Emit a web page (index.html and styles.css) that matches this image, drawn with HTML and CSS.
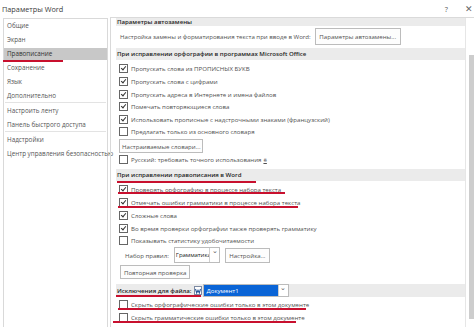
FILE: index.html
```html
<!DOCTYPE html>
<html lang="ru">

<head>
    <meta charset="UTF-8">
    <meta name="viewport" content="width=device-width, initial-scale=1.0">
    <title>Параметры Word</title>
    <link rel="stylesheet" href="styles.css">
</head>

<body>
    <div class="window">
        <div class="titlebar">
            <span class="title">Параметры Word</span>
            <span class="help">?</span>
            <span class="close">✕</span>
        </div>

        <div class="main">
            <!-- Left navigation -->
            <ul class="nav">
                <li>Общие</li>
                <li>Экран</li>
                <li class="active">Правописание</li>
                <li>Сохранение</li>
                <li>Язык</li>
                <li class="sep">Дополнительно</li>
                <li>Настроить ленту</li>
                <li class="sep">Панель быстрого доступа</li>
                <li>Надстройки</li>
                <li>Центр управления безопасностью</li>
            </ul>

            <!-- Options -->
            <div class="content">
                <div class="scroll">
                    <div class="head head-cut">Параметры автозамены</div>
                    <div class="line autocorrect">
                        <span>Настройка замены и форматирования текста при вводе в Word:</span>
                        <button class="btn btn-autocorrect">Параметры автозамены...</button>
                    </div>

                    <div class="head head-office">При исправлении орфографии в программах Microsoft Office</div>
                    <div class="group group-office">
                        <label class="row"><span class="cb on"></span>Пропускать слова из ПРОПИСНЫХ БУКВ</label>
                        <label class="row"><span class="cb on"></span>Пропускать слова с цифрами</label>
                        <label class="row"><span class="cb on"></span>Пропускать адреса в Интернете и имена файлов</label>
                        <label class="row"><span class="cb on"></span>Помечать повторяющиеся слова</label>
                        <label class="row"><span class="cb on"></span>Использовать прописные с надстрочными знаками (французский)</label>
                        <label class="row"><span class="cb"></span>Предлагать только из основного словаря</label>
                        <button class="btn btn-dict">Настраиваемые словари...</button>
                        <label class="row"><span class="cb"></span>Русский: требовать точного использования <u>ё</u></label>
                    </div>

                    <div class="head head-word marked">При исправлении правописания в Word</div>
                    <div class="group group-word">
                        <label class="row marked mark-spell"><span class="cb on"></span>Проверять орфографию в процессе набора текста</label>
                        <label class="row marked mark-grammar"><span class="cb on"></span>Отмечать ошибки грамматики в процессе набора текста</label>
                        <label class="row"><span class="cb on"></span>Сложные слова</label>
                        <label class="row"><span class="cb on"></span>Во время проверки орфографии также проверять грамматику</label>
                        <label class="row"><span class="cb"></span>Показывать статистику удобочитаемости</label>
                        <div class="line rules">
                            <span class="rules-label">Набор правил:</span>
                            <span class="select select-rules"><span class="value">Грамматика</span><span class="arrow">⌄</span></span>
                            <button class="btn btn-setup">Настройка...</button>
                        </div>
                        <button class="btn btn-recheck">Повторная проверка</button>
                    </div>

                    <div class="head head-file">
                        <span class="marked mark-file">Исключения для файла:</span>
                        <svg class="doc-icon" width="8" height="9" viewBox="0 0 8 9">
                            <rect x="0.5" y="0.5" width="7" height="8" fill="#fff" stroke="#7d8aa3"/>
                            <path d="M1.5 3 L2.7 7 L4 4.2 L5.3 7 L6.5 3" fill="none" stroke="#2b579a" stroke-width="1.1"/>
                        </svg>
                        <span class="select select-file"><span class="value">Документ1</span><span class="arrow">⌄</span></span>
                    </div>
                    <div class="group group-file">
                        <label class="row marked mark-hide1"><span class="cb"></span>Скрыть орфографические ошибки только в этом документе</label>
                        <label class="row marked mark-hide2"><span class="cb"></span>Скрыть грамматические ошибки только в этом документе</label>
                    </div>
                </div>
                <div class="scrollbar"><div class="thumb"></div></div>
            </div>
        </div>
    </div>
</body>

</html>
```

FILE: styles.css
```css
body {
    margin: 0;
    background: #fff;
    font-family: 'Open Sans', 'Liberation Sans', sans-serif;
    font-size: 6.1px;
    color: #505050;
}

.window {
    width: 474px;
    height: 327px;
    overflow: hidden;
    display: flex;
    flex-direction: column;
}

/* Title bar */
.titlebar {
    height: 17px;
    display: flex;
    align-items: center;
    padding-left: 2px;
    font-size: 7.3px;
    color: #3c3c3c;
}

.title {
    flex-grow: 1;
}

.help {
    margin-right: 17px;
    color: #555;
}

.close {
    margin-right: 1px;
    font-size: 9px;
    color: #666;
}

.main {
    flex-grow: 1;
    display: flex;
}

/* Navigation */
.nav {
    list-style: none;
    margin: 1px 0 0 3px;
    padding: 1px 0 0;
    width: 103px;
    border: 1px solid #d9d9d9;
    border-bottom: none;
    font-size: 6.3px;
    color: #555;
}

.nav li {
    height: 12px;
    line-height: 12px;
    margin-bottom: 2px;
    padding-left: 3px;
    white-space: nowrap;
}

.nav li.active {
    background-color: #c8c8c8;
    color: #333;
    position: relative;
}

.nav li.active::after {
    content: "";
    position: absolute;
    left: -1px;
    top: 12px;
    width: 60px;
    height: 2px;
    background: #c8102e;
}

.nav li.sep {
    border-bottom: 1px solid #e3e3e3;
    margin: 0 1px 2px;
    padding-left: 2px;
}

/* Content */
.content {
    flex-grow: 1;
    display: flex;
    margin-left: 2px;
    border-left: 1px solid #d9d9d9;
    border-top: 1px solid #dadada;
}

.scroll {
    flex-grow: 1;
    padding-left: 5px;
    overflow: hidden;
}

.scrollbar {
    width: 8px;
    border-left: 1px solid #e6e6e6;
    padding-top: 37px;
    padding-bottom: 8px;
}

.thumb {
    margin-left: 3px;
    width: 5px;
    height: 100%;
    background: #cdcdcd;
}

.head {
    background-color: #ebebeb;
    color: #262626;
    font-weight: 600;
    height: 12px;
    line-height: 12px;
    padding-left: 1px;
    white-space: nowrap;
}

.head-cut {
    height: 8px;
    line-height: 8px;
}

.line {
    display: flex;
    align-items: center;
    white-space: nowrap;
}

.autocorrect {
    height: 21px;
    padding-left: 4px;
    margin-bottom: 1px;
}

.btn {
    font-family: inherit;
    font-size: 6.1px;
    color: #505050;
    background: #fdfdfd;
    border: 1px solid #bcbcbc;
    border-radius: 0;
    padding: 0 2px;
    height: 17px;
    display: block;
    white-space: nowrap;
}

.btn-autocorrect {
    margin-left: 4px;
    width: 86px;
}

.group {
    padding-left: 3px;
}

.group-office {
    padding-top: 2.7px;
}

.row {
    display: flex;
    align-items: center;
    height: 12.6px;
    white-space: nowrap;
    position: relative;
}

.row u {
    text-decoration: underline;
    margin-left: 2px;
}

.cb {
    width: 7px;
    height: 7px;
    border: 1px solid #666;
    background: #fff;
    margin-right: 3px;
    position: relative;
    flex-shrink: 0;
}

.cb.on::after {
    content: "";
    position: absolute;
    left: 2px;
    top: 0;
    width: 2px;
    height: 4px;
    border: solid #333;
    border-width: 0 1px 1px 0;
    transform: rotate(40deg);
}

.btn-dict {
    width: 84px;
    height: 14px;
    margin: 1px 0 0;
}

.head-word {
    margin-top: 2.7px;
    position: relative;
}

.group-word {
    padding-top: 3px;
}

.group-word .row {
    height: 12.75px;
}

/* red annotation strokes */
.marked {
    position: relative;
}

.marked::after {
    content: "";
    position: absolute;
    height: 2px;
    background: #c8102e;
}

.head-word::after {
    left: 1px;
    top: 12px;
    width: 139px;
}

.mark-spell::after {
    left: -1px;
    top: 8.5px;
    width: 167px;
}

.mark-grammar::after {
    left: -1px;
    top: 10px;
    width: 180px;
}

.mark-file::after {
    left: -1px;
    top: 10px;
    width: 85px;
}

.mark-hide1::after {
    left: -1px;
    top: 10px;
    width: 188px;
}

.mark-hide2::after {
    left: -6px;
    top: 10.5px;
    width: 183px;
}

.rules {
    height: 16px;
}

.rules-label {
    margin-left: 6px;
    margin-right: 5px;
}

.select {
    display: flex;
    align-items: stretch;
    border: 1px solid #bcbcbc;
    background: #fff;
    min-width: 0;
    flex-shrink: 0;
}

.select .arrow {
    width: 9px;
    border-left: 1px solid #cfcfcf;
    text-align: center;
    font-size: 7px;
    line-height: 6px;
    color: #555;
}

.select-rules {
    height: 14px;
    width: 44px;
}

.select-rules .value {
    flex-grow: 1;
    min-width: 0;
    line-height: 14px;
    padding-left: 1px;
    color: #222;
    letter-spacing: -0.1px;
    overflow: hidden;
}

.btn-setup {
    margin-left: 5px;
    height: 15px;
    width: 45px;
}

.btn-recheck {
    margin: 2px 0 0 1px;
    height: 14px;
    padding: 0 3px;
}

.head-file {
    margin-top: 5px;
    height: 13px;
    display: flex;
    align-items: center;
}

.doc-icon {
    margin-left: 2px;
}

.select-file {
    margin-left: 1px;
    height: 11px;
    width: 84px;
    font-weight: 400;
}

.select-file .value {
    flex-grow: 1;
    background: #0a64d6;
    color: #fff;
    line-height: 11px;
    padding-left: 3px;
}

.group-file {
    padding-top: 0.7px;
}

.group-file .row {
    height: 12.7px;
}
```
